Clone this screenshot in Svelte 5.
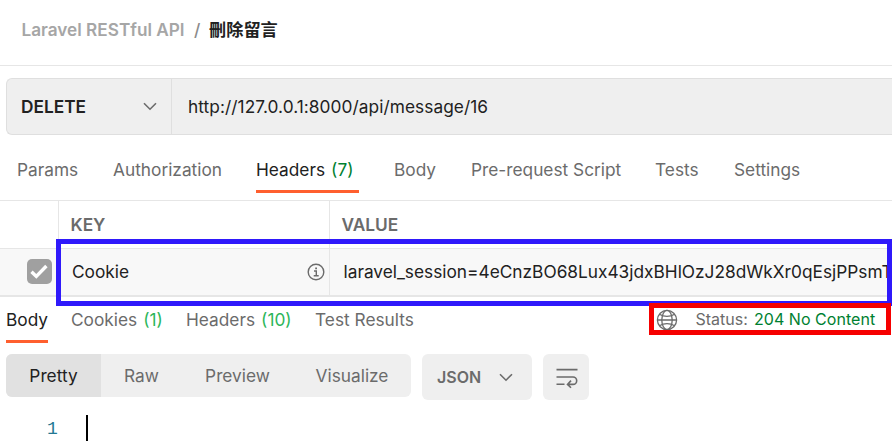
<script>
  const requestTabs = [
    { label: 'Params' },
    { label: 'Authorization' },
    { label: 'Headers', count: 7, active: true },
    { label: 'Body' },
    { label: 'Pre-request Script' },
    { label: 'Tests' },
    { label: 'Settings' }
  ];
  const responseTabs = [
    { label: 'Body', active: true },
    { label: 'Cookies', count: 1 },
    { label: 'Headers', count: 10 },
    { label: 'Test Results' }
  ];
  const views = ['Pretty', 'Raw', 'Preview', 'Visualize'];
</script>

<main>
  <header>
    <span class="collection">Laravel RESTful API</span>
    <span class="slash">/</span>
    <strong>刪除留言</strong>
  </header>

  <section class="urlbar">
    <div class="method">
      <b>DELETE</b>
      <svg width="14" height="9" viewBox="0 0 14 9"><path d="M1 1.2 7 7.2 13 1.2" /></svg>
    </div>
    <div class="url">http://127.0.0.1:8000/api/message/16</div>
  </section>

  <nav class="request-tabs">
    {#each requestTabs as t}
      <div class="tab" class:active={t.active}>
        <span>{t.label}{#if t.count}<i>({t.count})</i>{/if}</span>
      </div>
    {/each}
  </nav>

  <section class="table">
    <div class="row head">
      <div></div>
      <div class="cell">KEY</div>
      <div class="cell value">VALUE</div>
    </div>
    <div class="row data">
      <div class="check">
        <span class="box">
          <svg width="18" height="15" viewBox="0 0 18 15"><path d="M1.5 7.8 6.3 12.4 16.4 2" /></svg>
        </span>
      </div>
      <div class="cell key">
        <span>Cookie</span>
        <svg width="18" height="18" viewBox="0 0 18 18">
          <circle cx="9" cy="9" r="7.8" />
          <path d="M7 8h2.3v4.6M6.7 12.8h5" />
          <path d="M8.2 5.4h1.8" stroke-width="1.9" />
        </svg>
      </div>
      <div class="cell value">laravel_session=4eCnzBO68Lux43jdxBHlOzJ28dWkXr0qEsjPPsmT</div>
    </div>
    <div class="mark blue"></div>
  </section>

  <section class="response">
    <nav class="response-tabs">
      {#each responseTabs as t}
        <div class="tab" class:active={t.active}>
          <span>{t.label}{#if t.count}<i>({t.count})</i>{/if}</span>
        </div>
      {/each}
    </nav>
    <div class="status">
      <svg width="22" height="22" viewBox="0 0 22 22">
        <circle cx="11" cy="11" r="9.6" />
        <ellipse cx="11" cy="11" rx="5.2" ry="9.6" />
        <path d="M1.4 11h19.2M3.3 5.3Q11 9.6 18.7 5.3M3.3 16.7Q11 12.4 18.7 16.7" />
      </svg>
      <span class="label">Status:</span>
      <span class="code">204 No Content</span>
    </div>
    <div class="mark red"></div>
  </section>

  <section class="toolbar">
    <div class="segments">
      {#each views as v, n}
        <div class:selected={n === 0}>{v}</div>
      {/each}
    </div>
    <div class="format">
      <b>JSON</b>
      <svg width="14" height="9" viewBox="0 0 14 9"><path d="M1 1.2 7 7.2 13 1.2" /></svg>
    </div>
    <div class="wrap">
      <svg width="22" height="21" viewBox="0 0 22 21">
        <path d="M.5 1.6h21M.5 9H17a3.7 3.7 0 0 1 0 7.4h-5M.5 16.2h8M15 12.6l-3.5 3.8 3.5 3.4" />
      </svg>
    </div>
  </section>

  <section class="editor">
    <span class="line">1</span>
    <span class="caret"></span>
  </section>
</main>

<style>
  :global(body) { margin: 0; background: #fff; }
  main {
    width: 892px;
    height: 448px;
    overflow: hidden;
    position: relative;
    display: flex;
    flex-direction: column;
    background: #fff;
    color: #212121;
    font: 17.3px/24px Inter, "Noto Sans CJK TC", sans-serif;
    white-space: nowrap;
  }
  main * { box-sizing: border-box; }
  i { font-style: normal; }
  svg { display: block; fill: none; stroke: #6b6b6b; stroke-width: 1.6; flex: none; }

  header {
    height: 66px;
    flex: none;
    padding: 18px 0 0 21.5px;
    display: flex;
    border-bottom: 1px solid #e6e6e6;
    font-weight: 500;
    font-size: 17.2px;
  }
  .collection { width: 172.5px; color: #a6a6a6; font-weight: 600; }
  .slash { width: 15px; color: #8b8b8b; }
  strong { font-weight: 700; }

  .urlbar {
    flex: none;
    display: flex;
    height: 57px;
    margin: 12px 0 0 6px;
    background: #efefef;
    border: 1px solid #dfdfdf;
    border-right: 0;
    border-radius: 6px 0 0 6px;
  }
  .method {
    width: 165px;
    display: flex;
    align-items: center;
    justify-content: space-between;
    padding: 0 14px;
    border-right: 1px solid #dfdfdf;
  }
  b { font-weight: 600; }
  .url { padding: 16px 0 0 16px; letter-spacing: .06px; }

  .request-tabs {
    flex: none;
    display: grid;
    grid-template-columns: 96px 143px 138px 77px 184px 79px 90px;
    height: 65px;
    padding-left: 17px;
  }
  .tab { color: #6b6b6b; display: flex; }
  .tab i { color: #007f31; margin-left: 6px; }
  .tab.active { color: #212121; }
  .tab span { border-bottom: 3px solid transparent; }
  .tab.active span { border-color: #ff5f2e; }
  .request-tabs span { height: 58px; padding: 23px 6px 0 0; }

  .table { flex: none; height: 97px; position: relative; }
  .row { display: grid; grid-template-columns: 58px 271px 1fr; border-top: 1px solid #e6e6e6; }
  .head { height: 48px; font-weight: 600; color: #6b6b6b; }
  .data { height: 49px; background: #f8f8f8; border-bottom: 2px solid #e6e6e6; }
  .cell { border-left: 1px solid #e6e6e6; padding: 12px 0 0 11.5px; overflow: hidden; }
  .data .cell { padding: 11px 0 0 13px; }
  .data .value { padding-left: 13.5px; }
  .key { display: flex; justify-content: space-between; }
  .data .key { padding-right: 4px; }
  .key svg { margin-top: 3px; stroke-width: 1.4; }
  .check { padding: 10px 0 0 26.5px; }
  .box {
    width: 25px;
    height: 25px;
    border-radius: 5px;
    background: #a0a0a0;
    display: grid;
    place-items: center;
  }
  .box svg { stroke: #fff; stroke-width: 3.4; }

  .mark { position: absolute; z-index: 2; }
  .blue { left: 56px; top: 39px; width: 836px; height: 67px; border: 5px solid #2f19fb; }
  .red { left: 648.5px; top: 6px; width: 242px; height: 32px; border: 5px solid #f60000; }

  .response { flex: none; height: 46px; display: flex; position: relative; }
  .response-tabs {
    display: grid;
    grid-template-columns: 65px 115px 129px 120px;
    padding-left: 6px;
    width: 655.5px;
  }
  .response-tabs span { height: 46px; padding-top: 11px; }
  .response-tabs .tab i { color: #2cb65a; }
  .status { display: flex; padding-top: 10px; font-size: 16px; }
  .status .label { margin-left: 18px; width: 58.5px; color: #6b6b6b; }
  .status .code { color: #007f31; letter-spacing: .04px; }
  .status svg { stroke-width: 1.3; margin-top: 1.5px; }

  .toolbar { flex: none; height: 46px; margin: 11px 0 0 6px; display: flex; align-items: flex-start; }
  .segments {
    display: grid;
    grid-template-columns: 95px 81px 111px 118px;
    height: 43px;
    background: #efefef;
    border-radius: 6px;
    overflow: hidden;
    color: #6b6b6b;
    text-align: center;
    line-height: 44px;
  }
  .selected { background: #e1e1e1; color: #212121; }
  .format, .wrap { height: 46px; background: #efefef; border-radius: 6px; margin-left: 11px; display: flex; align-items: center; }
  .format { width: 110px; padding: 0 19.5px 0 15px; justify-content: space-between; color: #6b6b6b; font-size: 16px; }
  .wrap { width: 46px; justify-content: center; padding: 3px 0 0 1px; }

  .editor { display: flex; padding: 15px 0 0 47px; }
  .line { width: 39px; color: #237893; font: 18px/28px "Liberation Mono", monospace; }
  .caret { width: 2px; height: 26px; background: #000; }
</style>
